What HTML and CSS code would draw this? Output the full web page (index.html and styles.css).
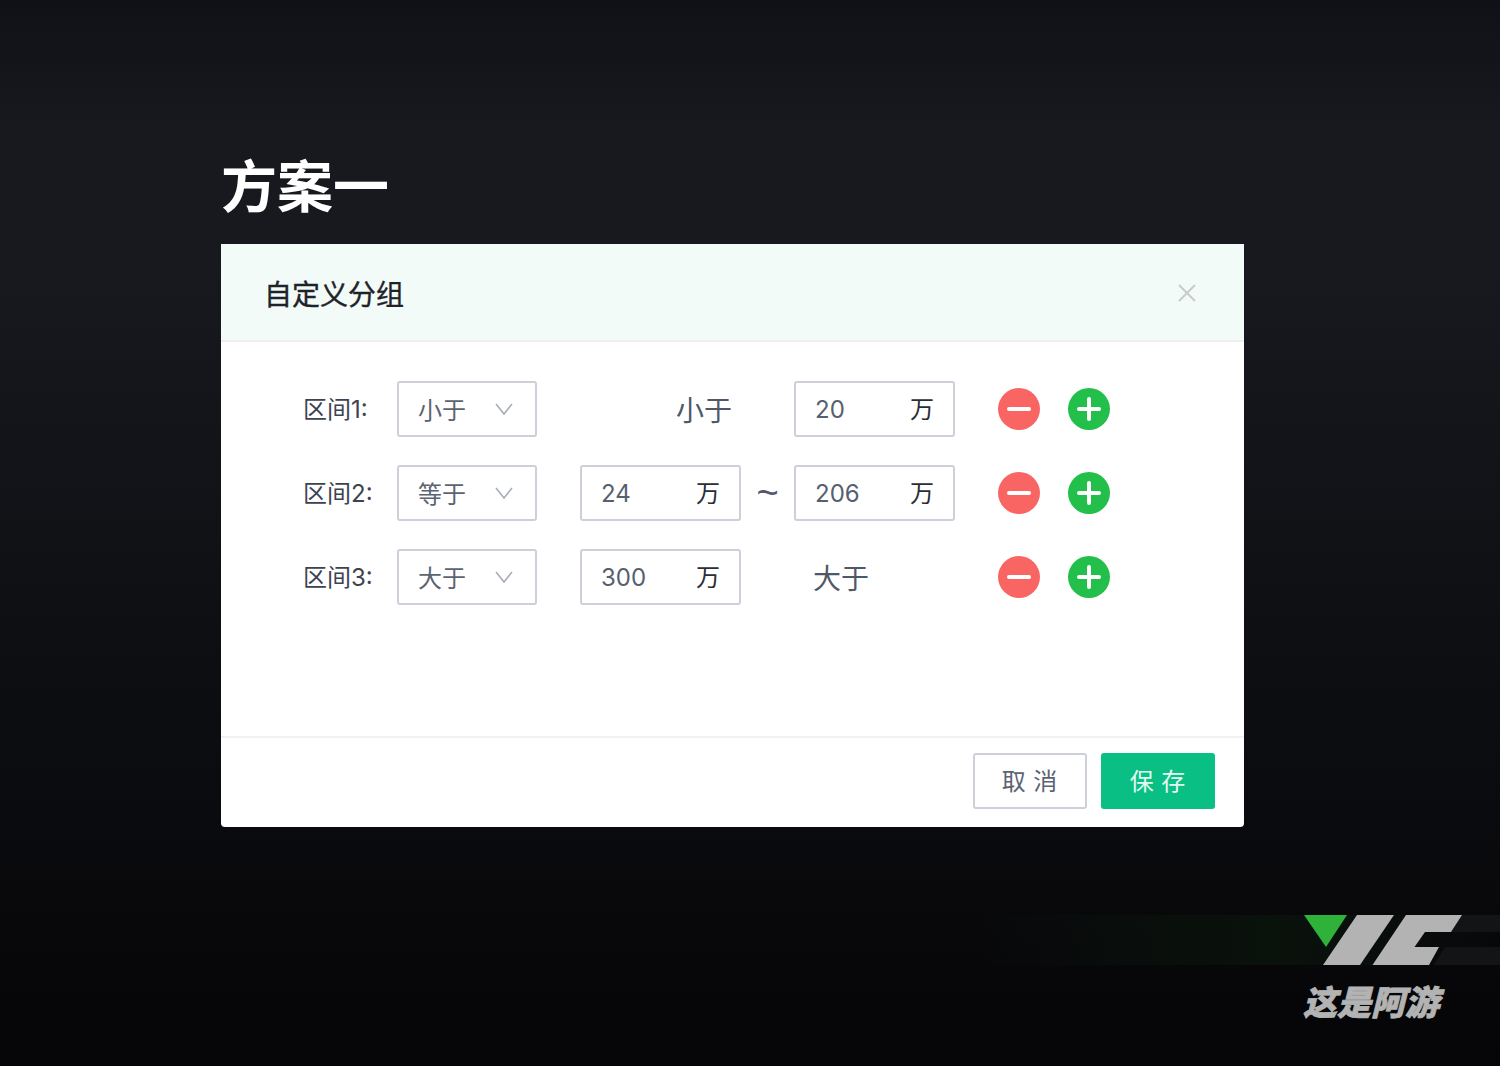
FILE: index.html
```html
<!DOCTYPE html>
<html lang="zh-CN">
<head>
<meta charset="utf-8">
<title>方案一</title>
<link rel="stylesheet" href="styles.css">
</head>
<body>
<main class="page">
  <h1 class="heading">方案一</h1>
  <section class="modal">
    <header class="modal-head">
      <h2 class="modal-title">自定义分组</h2>
      <svg class="close" viewBox="0 0 18 18"><path d="M1 1L17 17M17 1L1 17"/></svg>
    </header>
    <div class="modal-body">
      <div class="row">
        <span class="label">区间1:</span>
        <div class="box select"><span class="cjk">小于</span><svg class="chev" viewBox="0 0 18 12"><path d="M1 1L9 11L17 1"/></svg></div>
        <span class="static static-end">小于</span>
        <span class="sep"></span>
        <div class="box input"><span class="num">20</span><span class="unit">万</span></div>
        <button class="round minus"><svg viewBox="0 0 42 42"><path d="M11 21H31"/></svg></button>
        <button class="round plus"><svg viewBox="0 0 42 42"><path d="M11 21H31M21 11V31"/></svg></button>
      </div>
      <div class="row">
        <span class="label">区间2:</span>
        <div class="box select"><span class="cjk">等于</span><svg class="chev" viewBox="0 0 18 12"><path d="M1 1L9 11L17 1"/></svg></div>
        <div class="box input"><span class="num">24</span><span class="unit">万</span></div>
        <span class="sep">~</span>
        <div class="box input"><span class="num">206</span><span class="unit">万</span></div>
        <button class="round minus"><svg viewBox="0 0 42 42"><path d="M11 21H31"/></svg></button>
        <button class="round plus"><svg viewBox="0 0 42 42"><path d="M11 21H31M21 11V31"/></svg></button>
      </div>
      <div class="row">
        <span class="label">区间3:</span>
        <div class="box select"><span class="cjk">大于</span><svg class="chev" viewBox="0 0 18 12"><path d="M1 1L9 11L17 1"/></svg></div>
        <div class="box input"><span class="num">300</span><span class="unit">万</span></div>
        <span class="sep"></span>
        <span class="static static-start">大于</span>
        <button class="round minus"><svg viewBox="0 0 42 42"><path d="M11 21H31"/></svg></button>
        <button class="round plus"><svg viewBox="0 0 42 42"><path d="M11 21H31M21 11V31"/></svg></button>
      </div>
    </div>
    <footer class="modal-foot">
      <button class="btn btn-cancel">取 消</button>
      <button class="btn btn-save">保 存</button>
    </footer>
  </section>
</main>
<div class="brand">
  <div class="band"></div>
  <svg class="mark" viewBox="1300 915 200 50">
    <path class="stripe" d="M1455 915H1500V932H1445Z"/>
    <path class="stripe" d="M1445 947H1500V965H1434Z"/>
    <path class="tri" d="M1304 915H1347L1326 947Z"/>
    <path class="bar" d="M1357 915H1394L1360 965H1323Z"/>
    <path class="bar" d="M1406 915H1462L1451 932H1425L1414.5 947H1439L1429 965H1372.5Z"/>
  </svg>
  <div class="brand-name">这是阿游</div>
</div>
</body>
</html>
```
FILE: styles.css
```css
* { box-sizing: border-box; }
html, body { height: 100%; }
body {
  margin: 0;
  height: 1066px;
  overflow: hidden;
  position: relative;
  background: linear-gradient(180deg, #101116 0, #17191e 12%, #17191e 25%, #0e0f13 60%, #050507 100%);
  font-family: "Noto Sans CJK SC", sans-serif;
}
.page { padding: 144px 0 0 221px; }
.heading {
  margin: 0;
  height: 100px;
  font-size: 56px;
  line-height: 78px;
  font-weight: 700;
  color: #fff;
}
.modal {
  width: 1023px;
  height: 583px;
  background: #fff;
  border-radius: 0 0 4px 4px;
  display: flex;
  flex-direction: column;
}
.modal-head {
  height: 98px;
  flex: none;
  background: #f2fbf8;
  border-bottom: 2px solid #eef0f0;
  padding: 2px 48px 0 44px;
  display: flex;
  align-items: center;
  justify-content: space-between;
}
.modal-title {
  margin: 0 0 0 -1px;
  font-size: 28px;
  font-weight: 400;
  color: #1f2329;
  -webkit-text-stroke: 0.35px #1f2329;
  line-height: 40px;
}
.close { width: 18px; height: 18px; }
.close path { fill: none; stroke: #c6cbcc; stroke-width: 2; }
.modal-body {
  flex: 1;
  padding: 39px 0 0 82px;
  display: flex;
  flex-direction: column;
  gap: 28px;
}
.row {
  height: 56px;
  display: flex;
  align-items: center;
}
.label {
  width: 94px;
  flex: none;
  padding-bottom: 4px;
  font-size: 24px;
  color: #3c4350;
  font-family: Inter, "Noto Sans CJK SC", sans-serif;
  white-space: nowrap;
}
.box {
  height: 56px;
  flex: none;
  border: 2px solid #cdd0d8;
  border-radius: 3px;
  display: flex;
  align-items: center;
  justify-content: space-between;
  background: #fff;
}
.select {
  width: 140px;
  margin-right: 43px;
  padding: 0 22px 0 19px;
  font-size: 24px;
  color: #5b6472;
}
.cjk { padding-bottom: 2px; }
.chev { width: 18px; height: 12px; }
.chev path { fill: none; stroke: #a7adb8; stroke-width: 1.6; }
.input {
  width: 161px;
  padding: 0 19px 0 19px;
  font-size: 24px;
}
.num { font-family: Inter, sans-serif; color: #56606f; }
.unit { color: #2a2e35; padding-bottom: 4px; }
.static {
  width: 161px;
  flex: none;
  font-size: 28px;
  color: #4f5868;
}
.static-end { text-align: right; padding-right: 9px; }
.static-start { padding-left: 19px; }
.sep {
  width: 53px;
  flex: none;
  text-align: center;
  font-size: 38px;
  font-weight: 400;
  color: #4f5868;
  font-family: "Liberation Sans", sans-serif;
}
.round {
  width: 42px;
  height: 42px;
  flex: none;
  padding: 0;
  border: 0;
  border-radius: 50%;
  margin-left: 43px;
}
.round + .round { margin-left: 28px; }
.round svg { display: block; width: 42px; height: 42px; }
.round path { fill: none; stroke: #fff; stroke-width: 4; stroke-linecap: round; }
.minus { background: #f96563; }
.plus { background: #22c04a; }
.modal-foot {
  height: 91px;
  flex: none;
  border-top: 2px solid #f1f2f3;
  padding: 15px 29px 0 0;
  display: flex;
  justify-content: flex-end;
  gap: 14px;
}
.btn {
  width: 114px;
  height: 56px;
  border-radius: 3px;
  font-family: "Noto Sans CJK SC", sans-serif;
  font-size: 24px;
  letter-spacing: 1px;
  padding: 0 0 4px;
}
.btn-cancel { background: #fff; border: 2px solid #cdd0d8; color: #5b6472; }
.btn-save { background: #0abf84; border: 0; color: #e4f8f1; }
.brand {
  position: absolute;
  left: 0;
  top: 915px;
  width: 1500px;
  height: 110px;
}
.band {
  position: absolute;
  left: 980px;
  right: 0;
  top: 0;
  height: 50px;
  background: linear-gradient(90deg, rgba(12, 22, 14, 0) 0, #0a120c 55%, #0a110c 62%, rgba(10, 17, 12, 0) 100%);
}
.mark {
  position: absolute;
  left: 1300px;
  top: 0;
  width: 200px;
  height: 50px;
}
.tri { fill: #2fb239; }
.bar { fill: #b3b3b3; }
.stripe { fill: #131416; }
.brand-name {
  position: absolute;
  left: 1303px;
  top: 64px;
  font-size: 34px;
  line-height: 44px;
  font-weight: 900;
  font-style: italic;
  color: #b3b3b3;
  -webkit-text-stroke: 0.8px #b3b3b3;
  white-space: nowrap;
}
```
